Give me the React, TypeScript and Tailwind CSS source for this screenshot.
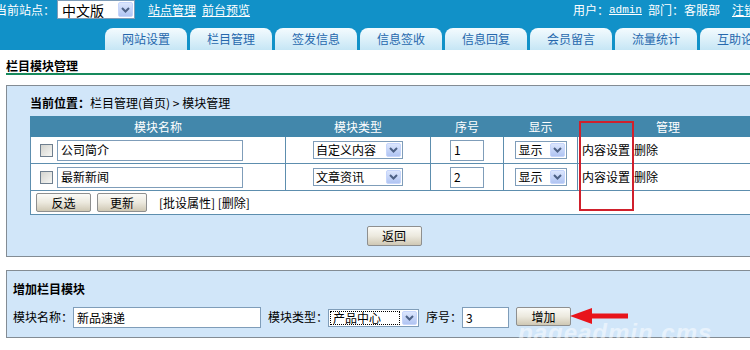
import React from "react";

const FONT = '"Noto Sans CJK SC", "Noto Sans", sans-serif';

function Drop() {
  return (
    <div className="m-[1px] flex w-[15px] items-center justify-center rounded-[2px] border border-[#c6d5fb] bg-gradient-to-b from-[#dce6fd] to-[#b0c4f2]">
      <svg width="9" height="6" viewBox="0 0 9 6">
        <polyline points="1,1 4.5,4.5 8,1" fill="none" stroke="#4d6185" strokeWidth="2" />
      </svg>
    </div>
  );
}

function Sel({ label, cls, focus, textCls }: { label: string; cls: string; focus?: boolean; textCls?: string }) {
  return (
    <div className={`flex items-stretch border border-[#7f9db9] bg-white text-black ${cls}`}>
      <div className={`flex flex-1 items-center overflow-hidden whitespace-nowrap pl-[2px] ${focus ? "m-[1px] border border-dotted border-black pl-[1px]" : ""} ${textCls ?? ""}`}>
        {label}
      </div>
      <Drop />
    </div>
  );
}

function Input({ value, cls }: { value: string; cls: string }) {
  return (
    <div className={`flex items-center border border-[#7f9db9] bg-white pl-[3px] text-black ${cls}`}>{value}</div>
  );
}

function Btn({ label, cls }: { label: string; cls: string }) {
  return (
    <div className={`flex items-center justify-center rounded-[2px] border border-[#8e8f8f] bg-gradient-to-b from-[#fbfbf8] via-[#ece9de] to-[#cfc8b4] text-black ${cls}`}>
      {label}
    </div>
  );
}

function Check() {
  return <div className="h-[13px] w-[13px] border border-[#6f7f8f] bg-gradient-to-br from-[#d4d4cf] to-[#f7f7f4]" />;
}

const tabs = ["网站设置", "栏目管理", "签发信息", "信息签收", "信息回复", "会员留言", "流量统计", "互助论坛"];

export default function App() {
  return (
    <div className="relative h-[350px] w-[750px] overflow-hidden bg-white text-[12px] leading-none text-black" style={{ fontFamily: FONT }}>
      <div className="w-[800px]">
        {/* top bar */}
        <div className="flex h-[50px] flex-col bg-[#1191c8]">
          <div className="flex h-[20px] items-center whitespace-nowrap pr-[44px] text-white">
            <span className="ml-[-5px]">当前站点：</span>
            <Sel label="中文版" cls="ml-[2px] h-[19px] w-[78px] self-start" textCls="pl-[4px] text-[14px]" />
            <span className="ml-[13px] underline">站点管理</span>
            <span className="ml-[6px] underline">前台预览</span>
            <div className="ml-auto flex items-center">
              <span>用户：</span>
              <span className="underline" style={{ fontFamily: '"Liberation Mono", monospace', fontSize: 11 }}>admin</span>
              <span className="ml-[6px]">部门：客服部</span>
              <span className="ml-[12px] underline">注销</span>
            </div>
          </div>
          <div className="mt-auto flex h-[22px] gap-[3px] pl-[105px]">
            {tabs.map((t) => (
              <div
                key={t}
                className="flex w-[82px] shrink-0 items-center justify-center rounded-t-[8px] bg-gradient-to-b from-[#f4fbfe] to-[#c6e6f5] text-[#2668ad]"
              >
                {t}
              </div>
            ))}
          </div>
        </div>

        <div className="px-[6px]">
          {/* title */}
          <div className="mt-[10px] h-[15px] border-b-2 border-[#178a5c] font-bold">栏目模块管理</div>

          {/* box 1 */}
          <div className="mt-[10px] w-[776px] border border-[#838c94] bg-[#d1e6f9] px-[23px] pb-[10px] pt-[11px]">
            <div className="mb-[5px] h-[14px]">
              <span className="font-bold">当前位置：</span>栏目管理(首页) &gt; 模块管理
            </div>
            <table className="w-[728px] table-fixed border-collapse border border-[#5d8eae] bg-white">
              <colgroup>
                <col className="w-[255px]" />
                <col className="w-[145px]" />
                <col className="w-[73px]" />
                <col className="w-[74px]" />
                <col className="w-[181px]" />
              </colgroup>
              <thead>
                <tr className="h-[20px] bg-[#4287ab] text-white">
                  <th className="border border-[#4287ab] font-normal">模块名称</th>
                  <th className="border border-[#4287ab] font-normal">模块类型</th>
                  <th className="border border-[#4287ab] font-normal">序号</th>
                  <th className="border border-[#4287ab] font-normal">显示</th>
                  <th className="border border-[#4287ab] font-normal">管理</th>
                </tr>
              </thead>
              <tbody>
                {[
                  ["公司简介", "自定义内容", "1"],
                  ["最新新闻", "文章资讯", "2"],
                ].map(([n, t, i]) => (
                  <tr key={n} className="h-[27px]">
                    <td className="border border-[#5d8eae] pl-[9px]">
                      <div className="flex items-center gap-[4px]">
                        <Check />
                        <Input value={n} cls="h-[21px] w-[186px] pl-[2px]" />
                      </div>
                    </td>
                    <td className="border border-[#5d8eae]">
                      <div className="flex justify-center">
                        <Sel label={t} cls="h-[18px] w-[90px]" />
                      </div>
                    </td>
                    <td className="border border-[#5d8eae]">
                      <div className="flex justify-center">
                        <Input value={i} cls="h-[21px] w-[34px]" />
                      </div>
                    </td>
                    <td className="border border-[#5d8eae]">
                      <div className="flex justify-center">
                        <Sel label="显示" cls="h-[18px] w-[52px]" textCls="pl-[3px]" />
                      </div>
                    </td>
                    <td className="border border-[#5d8eae] pl-[4px]">
                      内容设置<span className="ml-[4px]">删除</span>
                    </td>
                  </tr>
                ))}
                <tr className="h-[24px]">
                  <td colSpan={5} className="border border-[#5d8eae] pl-[5px]">
                    <div className="flex items-center">
                      <Btn label="反选" cls="h-[19px] w-[55px]" />
                      <Btn label="更新" cls="ml-[6px] h-[19px] w-[50px]" />
                      <span className="ml-[12px]">[批设属性] [删除]</span>
                    </div>
                  </td>
                </tr>
              </tbody>
            </table>
            <div className="mt-[11px] flex justify-center">
              <Btn label="返回" cls="h-[20px] w-[55px]" />
            </div>
          </div>

          {/* box 2 */}
          <div className="mt-[13px] w-[776px] border border-[#838c94] bg-[#d1e6f9] px-[6px] pb-[9px] pt-[12px]">
            <div className="h-[12px] font-bold">增加栏目模块</div>
            <div className="mt-[12px] flex items-start">
              <span className="mt-[4px]">模块名称：</span>
              <Input value="新品速递" cls="h-[21px] w-[188px]" />
              <span className="ml-[7px] mt-[4px]">模块类型：</span>
              <Sel label="产品中心" cls="mt-[2px] h-[18px] w-[91px]" focus />
              <span className="ml-[7px] mt-[4px]">序号：</span>
              <Input value="3" cls="h-[21px] w-[47px]" />
              <Btn label="增加" cls="ml-[7px] h-[19px] w-[55px]" />
            </div>
          </div>
        </div>
      </div>

      {/* annotation overlays */}
      <div className="absolute left-[579px] top-[121px] h-[90px] w-[55px] border-2 border-[#d0202c]" />
      <svg className="absolute left-[570px] top-[308px]" width="62" height="16" viewBox="0 0 62 16">
        <polygon points="0,8 22,0 22,16" fill="#e8141b" />
        <rect x="18" y="5.5" width="40" height="5" fill="#e8141b" />
      </svg>
      <div
        className="pointer-events-none absolute left-[518px] top-[321px] whitespace-nowrap text-[24px] font-bold italic tracking-[1px] text-white opacity-50"
        style={{ fontFamily: '"Liberation Sans", Arial, sans-serif' }}
      >
        pageadmin cms
      </div>
    </div>
  );
}
